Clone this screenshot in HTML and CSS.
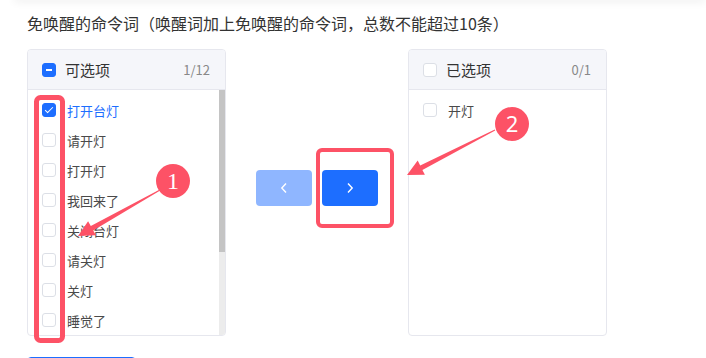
FILE: index.html
```html
<!DOCTYPE html>
<html lang="zh-CN">
<head>
    <meta charset="UTF-8">
    <meta name="viewport" content="width=device-width, initial-scale=1.0">
    <title>免唤醒命令词</title>
    <link rel="stylesheet" href="styles.css">
</head>
<body>
    <div class="top-shadow"></div>
    <div class="page">
        <div class="title">免唤醒的命令词（唤醒词加上免唤醒的命令词，总数不能超过10条）</div>

        <div class="transfer">
            <div class="panel">
                <div class="panel-header">
                    <span class="checkbox indeterminate"></span>
                    <span class="panel-title">可选项</span>
                    <span class="panel-count">1/12</span>
                </div>
                <div class="panel-body">
                    <div class="panel-list">
                        <div class="item active"><span class="checkbox checked"></span>打开台灯</div>
                        <div class="item"><span class="checkbox"></span>请开灯</div>
                        <div class="item"><span class="checkbox"></span>打开灯</div>
                        <div class="item"><span class="checkbox"></span>我回来了</div>
                        <div class="item"><span class="checkbox"></span>关闭台灯</div>
                        <div class="item"><span class="checkbox"></span>请关灯</div>
                        <div class="item"><span class="checkbox"></span>关灯</div>
                        <div class="item"><span class="checkbox"></span>睡觉了</div>
                    </div>
                    <div class="scrollbar"><div class="thumb"></div></div>
                </div>
            </div>

            <div class="actions">
                <button class="btn disabled">
                    <svg width="8" height="12" viewBox="0 0 8 12"><path d="M6 1.5 1.8 6 6 10.5" fill="none" stroke="#fff" stroke-width="1.4"/></svg>
                </button>
                <button class="btn">
                    <svg width="8" height="12" viewBox="0 0 8 12"><path d="M2 1.5 6.2 6 2 10.5" fill="none" stroke="#fff" stroke-width="1.4"/></svg>
                </button>
            </div>

            <div class="panel">
                <div class="panel-header">
                    <span class="checkbox"></span>
                    <span class="panel-title">已选项</span>
                    <span class="panel-count">0/1</span>
                </div>
                <div class="panel-body">
                    <div class="panel-list">
                        <div class="item"><span class="checkbox"></span>开灯</div>
                    </div>
                </div>
            </div>
        </div>

        <div class="save-btn"></div>
    </div>

    <svg class="notes" width="706" height="358" viewBox="0 0 706 358">
        <rect x="36.5" y="97.5" width="26" height="243" rx="4" fill="none" stroke="#fd5266" stroke-width="5"/>
        <rect x="318" y="150" width="74" height="76" rx="4" fill="none" stroke="#fd5266" stroke-width="4"/>
        <polygon fill="#fd5266" points="160.2,190.4 93.2,230.4 95.9,235.2 78,236 88.1,221.2 90.8,226 159.8,189.6"/>
        <polygon fill="#fd5266" points="495.2,130.4 422.4,169.9 424.9,174.8 407,175 417.7,160.6 420.2,165.5 494.8,129.6"/>
        <circle cx="173" cy="181" r="17" fill="#fd5266"/>
        <circle cx="512" cy="124" r="17" fill="#fd5266"/>
        <text x="173" y="189" class="note-num serif">1</text>
        <text x="512" y="132" class="note-num">2</text>
    </svg>
</body>
</html>
```

FILE: styles.css
```css
body {
    margin: 0;
    font-family: "Noto Sans CJK SC", "Noto Sans", sans-serif;
    background: #fff;
    color: #333;
    width: 706px;
    height: 358px;
    overflow: hidden;
    position: relative;
}

.top-shadow {
    height: 6px;
    margin: -6px 0 0 14px;
    box-shadow: 0 2px 8px rgba(0, 0, 0, 0.07);
}

.page {
    padding: 11px 0 0 27px;
}

.title {
    font-size: 16px;
    line-height: 24px;
    color: #333;
}

.transfer {
    display: flex;
    align-items: flex-start;
    margin-top: 14px;
}

.panel {
    width: 199px;
    height: 287px;
    box-sizing: border-box;
    border: 1px solid #e6e7ee;
    border-radius: 4px;
    display: flex;
    flex-direction: column;
    overflow: hidden;
}

.panel-header {
    height: 40px;
    flex-shrink: 0;
    box-sizing: border-box;
    background: #f5f6fa;
    border-bottom: 1px solid #e6e7ee;
    display: flex;
    align-items: center;
    padding: 0 15px 0 14px;
}

.panel-title {
    font-size: 15px;
    color: #333;
    margin-left: 9px;
}

.panel-count {
    margin-left: auto;
    font-size: 13px;
    color: #888;
}

.panel-body {
    flex: 1;
    display: flex;
    overflow: hidden;
}

.panel-list {
    flex: 1;
    padding: 5px 0 0 14px;
}

.scrollbar {
    width: 6px;
    background: #ececec;
    flex-shrink: 0;
}

.thumb {
    height: 162px;
    background: #c4c4c4;
}

.item {
    height: 30px;
    display: flex;
    align-items: center;
    font-size: 13px;
    color: #4a4a4a;
}

.item.active {
    color: #1d6eff;
}

.item .checkbox {
    margin-right: 11px;
}

.checkbox {
    width: 14px;
    height: 14px;
    box-sizing: border-box;
    border: 1px solid #dcdfe6;
    border-radius: 3px;
    background: #fff;
    position: relative;
    flex-shrink: 0;
}

.checkbox.checked,
.checkbox.indeterminate {
    background: #1d6eff;
    border-color: #1d6eff;
}

.checkbox.checked::after {
    content: "";
    position: absolute;
    left: 4px;
    top: 1px;
    width: 3px;
    height: 7px;
    border: solid #fff;
    border-width: 0 1.5px 1.5px 0;
    transform: rotate(45deg);
}

.checkbox.indeterminate::after {
    content: "";
    position: absolute;
    left: 3px;
    top: 5px;
    width: 6px;
    height: 2px;
    background: #fff;
}

.actions {
    display: flex;
    gap: 10px;
    margin: 121px 30px 0;
}

.btn {
    width: 56px;
    height: 36px;
    border: none;
    border-radius: 4px;
    background: #1d6eff;
    display: flex;
    align-items: center;
    justify-content: center;
    padding: 0;
}

.btn.disabled {
    background: #8fb6ff;
}

.save-btn {
    margin-top: 21px;
    width: 109px;
    height: 32px;
    box-sizing: border-box;
    border: 1px solid #1d6eff;
    border-radius: 4px;
}

.notes {
    position: absolute;
    left: 0;
    top: 0;
    pointer-events: none;
}

.note-num {
    fill: #fff;
    font-family: "Noto Sans", sans-serif;
    font-size: 22px;
    text-anchor: middle;
}

.note-num.serif {
    font-family: "Liberation Serif", serif;
    font-size: 24px;
}
```
